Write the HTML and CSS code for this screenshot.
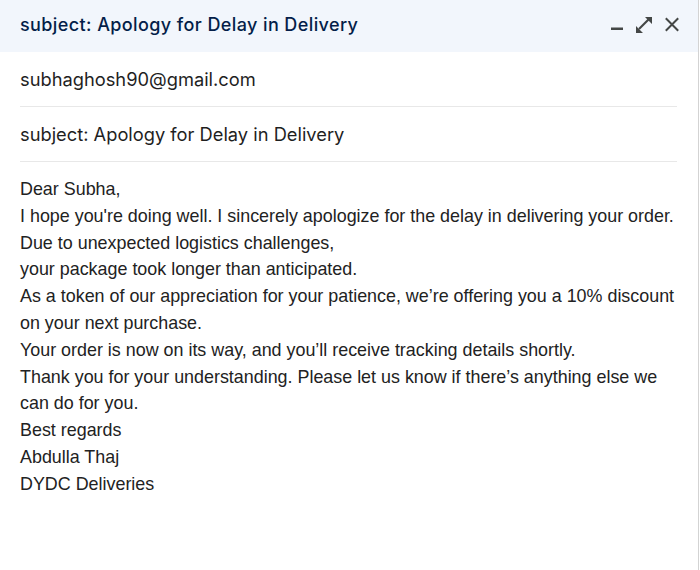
FILE: index.html
```html
<!DOCTYPE html>
<html>
<head>
<meta charset="utf-8">
<link rel="stylesheet" href="styles.css">
</head>
<body>
<div class="compose">
  <div class="header">
    <div class="title">subject: Apology for Delay in Delivery</div>
    <div class="actions">
      <svg class="icon" width="20" height="20" viewBox="0 0 20 20"><rect x="5" y="11.5" width="12" height="2.5" fill="#444746"/></svg>
      <svg class="icon" width="20" height="20" viewBox="0 0 20 20"><path d="M5 13L15 3" stroke="#444746" stroke-width="2.2" fill="none"/><path d="M18 1v7l-7-7z M2 17v-7l7 7z" fill="#444746"/></svg>
      <svg class="icon" width="20" height="20" viewBox="0 0 20 20"><path d="M3.8 2.3L16.2 14.7M16.2 2.3L3.8 14.7" stroke="#444746" stroke-width="2" fill="none"/></svg>
    </div>
  </div>
  <div class="content">
    <div class="field">subhaghosh90@gmail.com</div>
    <div class="field">subject: Apology for Delay in Delivery</div>
    <div class="body">
      <div>Dear Subha,</div>
      <div>I hope you're doing well. I sincerely apologize for the delay in delivering your order.</div>
      <div>Due to unexpected logistics challenges,</div>
      <div>your package took longer than anticipated.</div>
      <div>As a token of our appreciation for your patience, we’re offering you a 10% discount on your next purchase.</div>
      <div>Your order is now on its way, and you’ll receive tracking details shortly.</div>
      <div>Thank you for your understanding. Please let us know if there’s anything else we can do for you.</div>
      <div>Best regards</div>
      <div>Abdulla Thaj</div>
      <div>DYDC Deliveries</div>
    </div>
  </div>
</div>
</body>
</html>
```
FILE: styles.css
```css
html, body {
  margin: 0;
  padding: 0;
  background: #ffffff;
}
.compose {
  width: 699px;
  height: 570px;
  border-right: 1px solid #d3d3d3;
  box-sizing: border-box;
  background: #fff;
}
.header {
  height: 52px;
  background: #f2f6fc;
  display: flex;
  align-items: center;
  justify-content: space-between;
  padding: 0 16px 0 20px;
}
.title {
  font-family: Inter, Roboto, "Liberation Sans", sans-serif;
  font-weight: 500;
  font-size: 18px;
  letter-spacing: 0.4px;
  color: #041e49;
  margin-bottom: 4px;
}
.actions {
  display: flex;
  gap: 8px;
  align-items: center;
}
.icon {
  display: block;
}
.content {
  padding: 0 14px 0 20px;
}
.field {
  font-family: Inter, Roboto, "Liberation Sans", sans-serif;
  font-size: 18.3px;
  color: #1f1f1f;
  height: 54px;
  line-height: 55px;
  margin-right: 7px;
  border-bottom: 1px solid #e8e8e8;
}
.body {
  padding-top: 14px;
  font-family: "Liberation Sans", Arial, sans-serif;
  font-size: 17.9px;
  line-height: 26.8px;
  color: #222;
}
```
